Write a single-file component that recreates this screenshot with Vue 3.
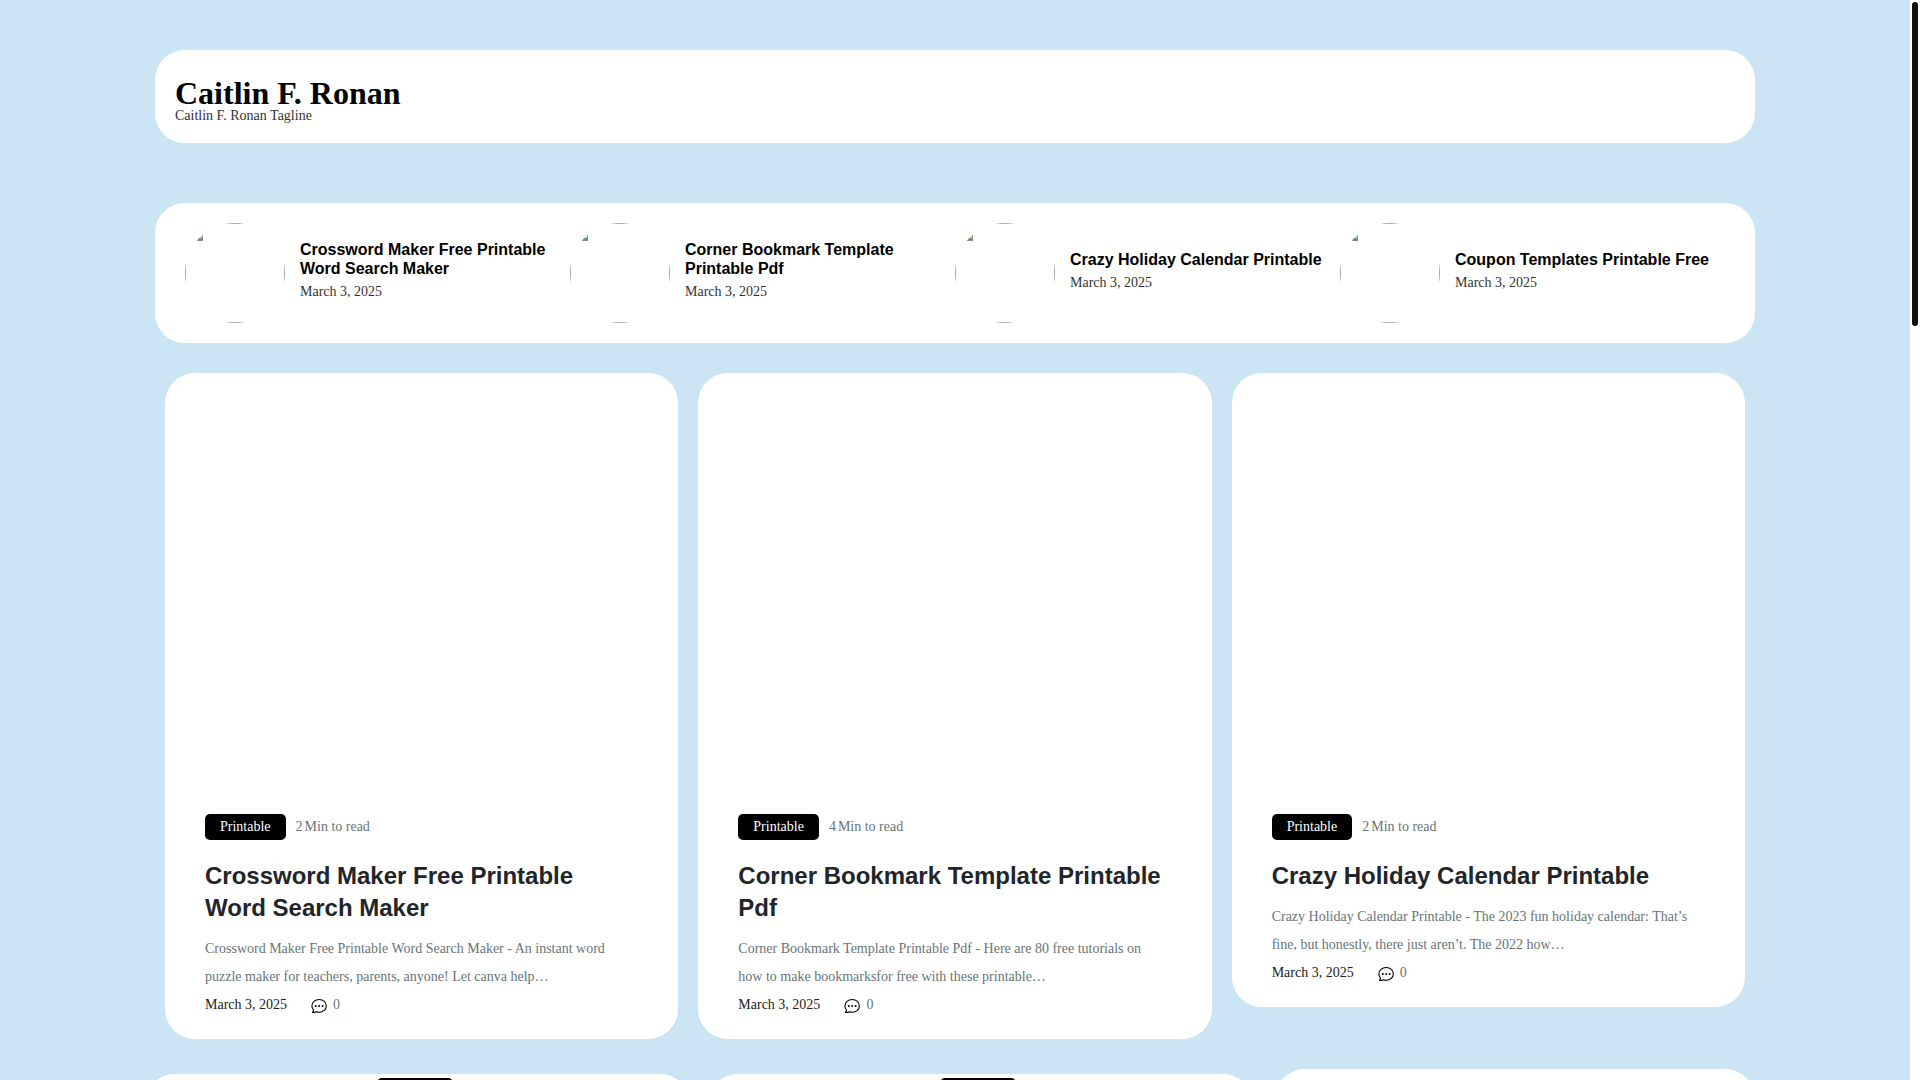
<script setup>
const featured = [
  'Crossword Maker Free Printable Word Search Maker',
  'Corner Bookmark Template Printable Pdf',
  'Crazy Holiday Calendar Printable',
  'Coupon Templates Printable Free',
]

const posts = [
  {
    title: 'Crossword Maker Free Printable Word Search Maker',
    minutes: 2,
    excerpt:
      'Crossword Maker Free Printable Word Search Maker - An instant word puzzle maker for teachers, parents, anyone! Let canva help…',
  },
  {
    title: 'Corner Bookmark Template Printable Pdf',
    minutes: 4,
    excerpt:
      'Corner Bookmark Template Printable Pdf - Here are 80 free tutorials on how to make bookmarksfor free with these printable…',
  },
  {
    title: 'Crazy Holiday Calendar Printable',
    minutes: 2,
    excerpt:
      'Crazy Holiday Calendar Printable - The 2023 fun holiday calendar: That’s fine, but honestly, there just aren’t. The 2022 how…',
  },
]
</script>

<template>
  <div class="page">
    <div class="content">
      <header class="panel site-header">
        <h1><a href="#">Caitlin F. Ronan</a></h1>
        <p>Caitlin F. Ronan Tagline</p>
      </header>

      <section class="panel featured">
        <article v-for="title in featured" :key="title" class="featured-item">
          <div class="thumb">
            <div class="thumb-frame">
              <svg width="16" height="16" viewBox="0 0 16 16" aria-hidden="true">
                <path d="M0 0h16v16H0z" fill="#8a8a8a" />
                <path d="M1 1h14v14H1z" fill="#c3d9f7" />
                <path d="M1 15l8-3 3 1 3 0v2z" fill="#52a447" />
                <path d="M10 13l5-5v3l-3 2z" fill="#fff" />
              </svg>
            </div>
          </div>
          <div class="featured-text">
            <h2><a href="#">{{ title }}</a></h2>
            <time datetime="2025-03-03">March 3, 2025</time>
          </div>
        </article>
      </section>

      <main class="posts">
        <article v-for="post in posts" :key="post.title" class="panel post">
          <div class="post-image"></div>
          <div class="post-body">
            <div class="tags">
              <a class="badge" href="#">Printable</a>
              <span class="minutes">{{ post.minutes }}</span>
              <span class="read">Min to read</span>
            </div>
            <h2><a href="#">{{ post.title }}</a></h2>
            <p>{{ post.excerpt }}</p>
            <div class="meta">
              <time datetime="2025-03-03">March 3, 2025</time>
              <svg width="16" height="16" viewBox="0 0 16 16" aria-hidden="true">
                <path
                  d="M1.5 14.5c.8-.8 1-1.700.9-2.700C1.400 10.700.9 9.300.9 7.900.9 4.300 4 1.500 8.200 1.500s7.100 2.800 7.100 6.400-3 6.300-7.100 6.300c-1 0-1.900-.1-2.800-.5-1.200.6-2.500.9-3.900.8z"
                  fill="none"
                  stroke="#000"
                  stroke-width="1.100"
                  stroke-linejoin="round"
                />
                <circle cx="4.800" cy="8" r="1" />
                <circle cx="8.200" cy="8" r="1" />
                <circle cx="11.600" cy="8" r="1" />
              </svg>
              <span>0</span>
            </div>
          </div>
        </article>
      </main>

      <div class="lower">
        <div class="latest">
          <article v-for="n in 2" :key="n" class="panel latest-post">
            <a class="badge small" href="#" aria-label="Printable"></a>
          </article>
        </div>
        <aside class="panel sidebar"></aside>
      </div>
    </div>
    <div class="rail"><div class="rail-thumb"></div></div>
  </div>
</template>

<style>
body {
  margin: 0;
}
</style>

<style scoped>
.page {
  display: flex;
  height: 100vh;
  overflow: hidden;
  background: #cce5f4;
  color: #333;
  font: 14px/20px "Liberation Serif", serif;
}

.page * {
  box-sizing: border-box;
}

h1,
h2,
p {
  margin: 0;
}

a {
  color: inherit;
  text-decoration: none;
}

.content {
  flex: 1;
  max-width: 1600px;
  margin: 0 auto;
  padding-top: 50px;
}

.panel {
  background: #fff;
  border-radius: 30px;
}

.site-header {
  padding: 27px 20px 20px;
}

.site-header h1 {
  color: #000;
  font-size: 32px;
  line-height: 32px;
}

.site-header p {
  line-height: 14px;
}

.featured {
  display: grid;
  grid-template-columns: repeat(4, 1fr);
  margin-top: 60px;
  padding: 20px 30px;
}

.featured-item {
  display: flex;
  align-items: center;
  gap: 15px;
}

.thumb {
  flex: none;
  width: 100px;
  height: 100px;
  border-radius: 50%;
  overflow: hidden;
}

.thumb-frame {
  height: 100%;
  padding: 1px;
  border: 1px solid #a8a8a8;
}

.thumb-frame svg {
  display: block;
}

.featured-text {
  margin-bottom: 4px;
}

.featured-text h2 {
  color: #000;
  font: bold 16px/19px "Liberation Sans", sans-serif;
}

.featured-text time {
  display: block;
  margin-top: 4px;
}

.posts {
  display: grid;
  grid-template-columns: repeat(3, 1fr);
  align-items: start;
  gap: 20px;
  margin-top: 30px;
  padding: 0 10px;
}

.post-image {
  height: 400px;
}

.post-body {
  padding: 41px 40px 20px;
}

.tags {
  display: flex;
  align-items: center;
  color: #687476;
}

.badge {
  padding: 3px 15px;
  border-radius: 5px;
  background: #000;
  color: #fff;
}

.minutes {
  margin: 0 2px 0 10px;
}

.post h2 {
  margin-top: 20px;
  color: #212529;
  font: bold 24px/32px "Liberation Sans", sans-serif;
}

.post p {
  margin-top: 11px;
  padding-right: 8px;
  color: #687476;
  line-height: 28px;
}

.meta {
  display: flex;
  align-items: center;
  color: #687476;
  line-height: 28px;
}

.meta time {
  color: #222;
}

.meta svg {
  margin: 2px 6px 0 24px;
}

.lower {
  display: flex;
  align-items: flex-start;
  gap: 22px;
  margin: 30px 0 0 -10px;
}

.latest {
  display: grid;
  flex: 1;
  grid-template-columns: 1fr 1fr;
  gap: 18px;
  padding-top: 5px;
}

.latest-post {
  display: flex;
  justify-content: center;
  height: 400px;
  padding: 4px 6px 0 0;
}

.small {
  width: 76px;
  height: 26px;
}

.sidebar {
  width: 480px;
  height: 400px;
}

.rail {
  flex: none;
  width: 10px;
  padding: 2px;
  background: #fff;
}

.rail-thumb {
  height: 30vh;
  border-radius: 3px;
  background: #111;
}
</style>
